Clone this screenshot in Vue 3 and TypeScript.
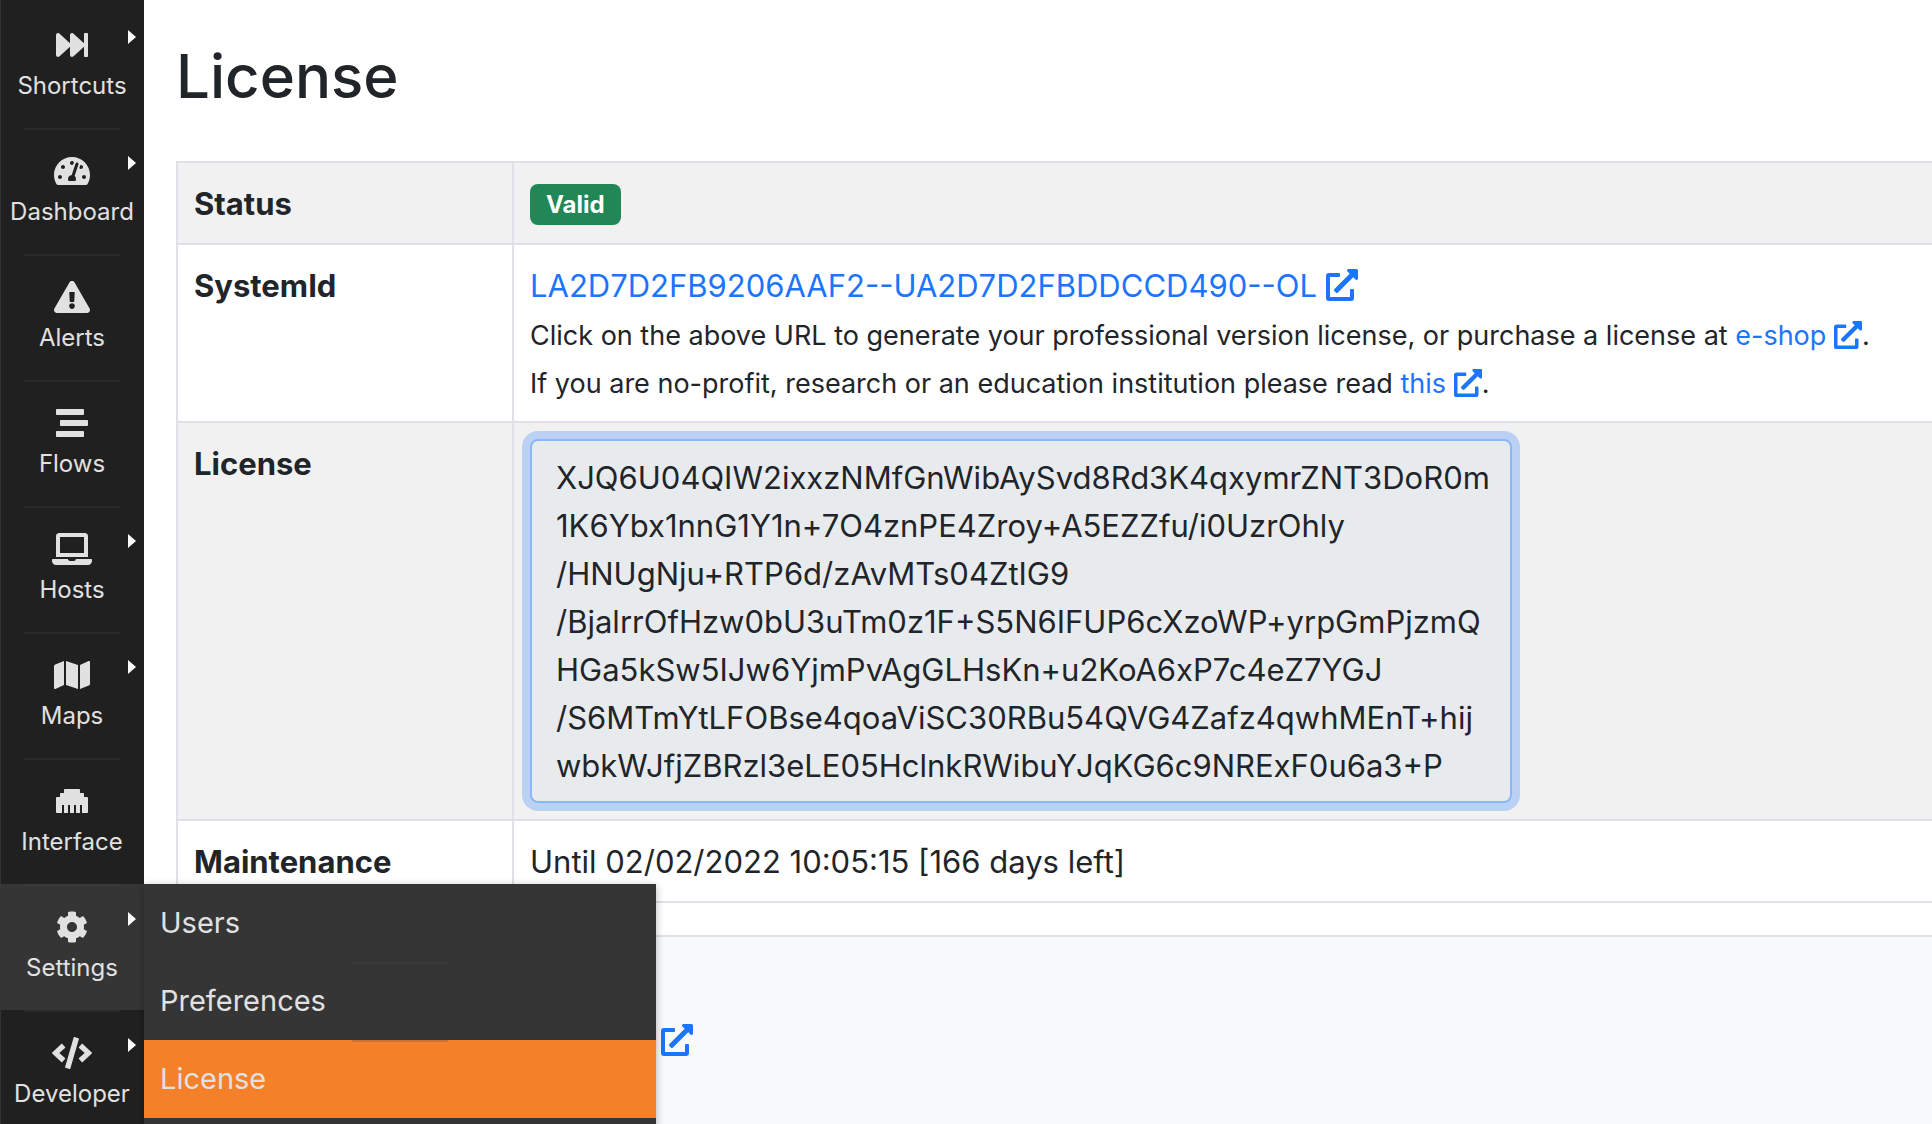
<script setup lang="ts">
interface NavItem {
  label: string
  icon: string
  width: number
  arrow: boolean
  submenu?: { label: string; active: boolean }[]
}

const externalIcon =
  'M432 320h-32a16 16 0 0 0-16 16v112H64V128h144a16 16 0 0 0 16-16V80a16 16 0 0 0-16-16H48a48 48 0 0 0-48 48v352a48 48 0 0 0 48 48h352a48 48 0 0 0 48-48V336a16 16 0 0 0-16-16zM488 0H360c-21.37 0-32.05 25.91-17 41l35.73 35.73L135 320.37a24 24 0 0 0 0 34L157.67 377a24 24 0 0 0 34 0l243.61-243.68L471 169c15 15 41 4.5 41-17V24a24 24 0 0 0-24-24z'

const navItems: NavItem[] = [
  {
    label: 'Shortcuts',
    width: 512,
    arrow: true,
    icon: 'M512 76v360c0 6.6-5.4 12-12 12h-40c-6.6 0-12-5.4-12-12V284.1L276.5 440.6c-20.6 17.2-52.5 2.8-52.5-24.6V284.1L52.5 440.6C31.9 457.8 0 443.4 0 416V96c0-27.4 31.9-41.7 52.5-24.6L224 226.8V96c0-27.4 31.9-41.7 52.5-24.6L448 226.8V76c0-6.6 5.4-12 12-12h40c6.6 0 12 5.4 12 12z',
  },
  {
    label: 'Dashboard',
    width: 576,
    arrow: true,
    icon: 'M288 32C128.94 32 0 160.94 0 320c0 52.8 14.25 102.26 39.06 144.8 5.61 9.62 16.3 15.2 27.44 15.2h443c11.14 0 21.83-5.58 27.44-15.2C561.75 422.26 576 372.8 576 320c0-159.06-128.94-288-288-288zm0 64c14.71 0 26.58 10.13 30.32 23.65-1.11 2.26-2.64 4.23-3.45 6.67l-9.22 27.67c-5.13 3.49-10.97 6.01-17.64 6.01-17.67 0-32-14.33-32-32S270.33 96 288 96zM96 384c-17.67 0-32-14.33-32-32s14.33-32 32-32 32 14.33 32 32-14.33 32-32 32zm48-160c-17.67 0-32-14.33-32-32s14.33-32 32-32 32 14.33 32 32-14.33 32-32 32zm246.77-72.41l-61.33 184C343.13 347.33 352 364.54 352 384c0 11.72-3.38 22.55-8.88 32H232.88c-5.5-9.45-8.88-20.28-8.88-32 0-33.94 26.5-61.43 59.9-63.59l61.34-184.01c4.17-12.56 17.73-19.45 30.36-15.17 12.57 4.19 19.35 17.79 15.17 30.36zm14.66 57.2l15.52-46.55c3.47-1.29 7.13-2.23 11.05-2.23 17.67 0 32 14.33 32 32s-14.33 32-32 32c-11.38-.01-20.89-6.28-26.57-15.22zM480 384c-17.67 0-32-14.33-32-32s14.33-32 32-32 32 14.33 32 32-14.33 32-32 32z',
  },
  {
    label: 'Alerts',
    width: 576,
    arrow: false,
    icon: 'M569.517 440.013C587.975 472.007 564.806 512 527.94 512H48.054c-36.937 0-59.999-40.055-41.577-71.987L246.423 23.985c18.467-32.009 64.72-31.951 83.154 0l239.94 416.028zM288 354c-25.405 0-46 20.595-46 46s20.595 46 46 46 46-20.595 46-46-20.595-46-46-46zm-43.673-165.346l7.418 136c.347 6.364 5.609 11.346 11.982 11.346h48.546c6.373 0 11.635-4.982 11.982-11.346l7.418-136c.375-6.874-5.098-12.654-11.982-12.654h-63.383c-6.884 0-12.356 5.78-11.981 12.654z',
  },
  {
    label: 'Flows',
    width: 512,
    arrow: false,
    icon: 'M16 128h416c8.84 0 16-7.16 16-16V48c0-8.84-7.16-16-16-16H16C7.16 32 0 39.16 0 48v64c0 8.84 7.16 16 16 16zm480 80H80c-8.84 0-16 7.16-16 16v64c0 8.84 7.16 16 16 16h416c8.84 0 16-7.16 16-16v-64c0-8.84-7.16-16-16-16zm-64 176H16c-8.84 0-16 7.16-16 16v64c0 8.84 7.16 16 16 16h416c8.84 0 16-7.16 16-16v-64c0-8.84-7.16-16-16-16z',
  },
  {
    label: 'Hosts',
    width: 640,
    arrow: true,
    icon: 'M624 416H381.54c-.74 19.81-14.71 32-32.74 32H288c-18.69 0-33.02-17.47-32.77-32H16c-8.8 0-16 7.2-16 16v16c0 35.2 28.8 64 64 64h512c35.2 0 64-28.8 64-64v-16c0-8.8-7.2-16-16-16zM576 48c0-26.4-21.6-48-48-48H112C85.6 0 64 21.6 64 48v336h512V48zm-64 272H128V64h384v256z',
  },
  {
    label: 'Maps',
    width: 576,
    arrow: true,
    icon: 'M0 117.66v346.32c0 11.32 11.43 19.06 21.94 14.86L160 416V32L20.12 87.95A32.006 32.006 0 0 0 0 117.66zM192 416l192 64V96L192 32v384zM554.06 33.16L416 96v384l139.88-55.95A31.996 31.996 0 0 0 576 394.34V48.02c0-11.32-11.43-19.06-21.94-14.86z',
  },
  {
    label: 'Interface',
    width: 512,
    arrow: false,
    icon: 'M496 192h-48v-48c0-8.8-7.2-16-16-16h-48V80c0-8.8-7.2-16-16-16H144c-8.8 0-16 7.2-16 16v48H80c-8.8 0-16 7.2-16 16v48H16c-8.8 0-16 7.2-16 16v224c0 8.8 7.2 16 16 16h80V320h32v128h64V320h32v128h64V320h32v128h64V320h32v128h80c8.8 0 16-7.2 16-16V208c0-8.8-7.2-16-16-16z',
  },
  {
    label: 'Settings',
    width: 512,
    arrow: true,
    icon: 'M487.4 315.7l-42.6-24.6c4.3-23.2 4.3-47 0-70.2l42.6-24.6c4.9-2.8 7.1-8.6 5.5-14-11.1-35.6-30-67.8-54.7-94.6-3.8-4.1-10-5.1-14.8-2.3L380.8 110c-17.9-15.4-38.5-27.3-60.8-35.1V25.8c0-5.6-3.9-10.5-9.4-11.7-36.7-8.2-74.3-7.8-109.2 0-5.5 1.2-9.4 6.1-9.4 11.7V75c-22.2 7.9-42.8 19.8-60.8 35.1L88.7 85.5c-4.9-2.8-11-1.9-14.8 2.3-24.7 26.7-43.6 58.9-54.7 94.6-1.7 5.4.6 11.2 5.5 14L67.3 221c-4.3 23.2-4.3 47 0 70.2l-42.6 24.6c-4.9 2.8-7.1 8.6-5.5 14 11.1 35.6 30 67.8 54.7 94.6 3.8 4.1 10 5.1 14.8 2.3l42.6-24.6c17.9 15.4 38.5 27.3 60.8 35.1v49.2c0 5.6 3.9 10.5 9.4 11.7 36.7 8.2 74.3 7.8 109.2 0 5.5-1.2 9.4-6.1 9.4-11.7v-49.2c22.2-7.9 42.8-19.8 60.8-35.1l42.6 24.6c4.9 2.8 11 1.9 14.8-2.3 24.7-26.7 43.6-58.9 54.7-94.6 1.5-5.5-.7-11.3-5.6-14.1zM256 336c-44.1 0-80-35.9-80-80s35.9-80 80-80 80 35.9 80 80-35.9 80-80 80z',
    submenu: [
      { label: 'Users', active: false },
      { label: 'Preferences', active: false },
      { label: 'License', active: true },
    ],
  },
  {
    label: 'Developer',
    width: 640,
    arrow: true,
    icon: 'M278.9 511.5l-61-17.7c-6.4-1.8-10-8.5-8.2-14.9L346.2 8.7c1.8-6.4 8.5-10 14.9-8.2l61 17.7c6.4 1.8 10 8.5 8.2 14.9L293.8 503.3c-1.9 6.4-8.5 10.1-14.9 8.2zm-114-112.2l43.5-46.4c4.6-4.9 4.3-12.7-.8-17.2L117 256l90.6-79.7c5.1-4.5 5.5-12.3.8-17.2l-43.5-46.4c-4.5-4.8-12.1-5.1-17-.5L3.8 247.2c-5.1 4.7-5.1 12.8 0 17.5l144.1 135.1c4.9 4.6 12.5 4.4 17-.5zm327.2.6l144.1-135.1c5.1-4.7 5.1-12.8 0-17.5L492.1 112.1c-4.8-4.5-12.4-4.3-17 .5L431.6 159c-4.6 4.9-4.3 12.7.8 17.2L523 256l-90.6 79.7c-5.1 4.5-5.5 12.3-.8 17.2l43.5 46.4c4.5 4.9 12.1 5.1 17 .6z',
  },
]

const licenseKey = [
  'XJQ6U04QIW2ixxzNMfGnWibAySvd8Rd3K4qxymrZNT3DoR0m',
  '1K6Ybx1nnG1Y1n+7O4znPE4Zroy+A5EZZfu/i0UzrOhly',
  '/HNUgNju+RTP6d/zAvMTs04ZtIG9',
  '/BjalrrOfHzw0bU3uTm0z1F+S5N6IFUP6cXzoWP+yrpGmPjzmQ',
  'HGa5kSw5IJw6YjmPvAgGLHsKn+u2KoA6xP7c4eZ7YGJ',
  '/S6MTmYtLFOBse4qoaViSC30RBu54QVG4Zafz4qwhMEnT+hij',
  'wbkWJfjZBRzl3eLE05HclnkRWibuYJqKG6c9NRExF0u6a3+P',
].join('\n')
</script>

<template>
  <div class="shell">
    <nav class="sidebar">
      <ul class="nav">
        <li v-for="item in navItems" :key="item.label" class="nav-item" :class="{ open: item.submenu }">
          <a class="nav-link" href="#">
            <svg class="nav-icon" :viewBox="`0 0 ${item.width} 512`" aria-hidden="true">
              <path :d="item.icon" fill="currentColor" />
            </svg>
            <span class="nav-label">{{ item.label }}</span>
            <span v-if="item.arrow" class="caret"></span>
          </a>
          <ul v-if="item.submenu" class="submenu">
            <li v-for="entry in item.submenu" :key="entry.label" class="submenu-item">
              <a class="submenu-link" :class="{ active: entry.active }" href="#">{{ entry.label }}</a>
            </li>
          </ul>
        </li>
      </ul>
    </nav>

    <div class="page">
      <main class="content">
        <h1 class="title">License</h1>
        <table class="details">
          <tbody>
            <tr>
              <th scope="row">Status</th>
              <td><div class="status"><span class="badge">Valid</span></div></td>
            </tr>
            <tr>
              <th scope="row">SystemId</th>
              <td>
                <a class="link" href="#">LA2D7D2FB9206AAF2--UA2D7D2FBDDCCD490--OL
                  <svg class="external" viewBox="0 0 512 512" aria-hidden="true"><path :d="externalIcon" fill="currentColor" /></svg></a>
                <p class="note">
                  <small>Click on the above URL to generate your professional version license, or purchase a license at
                    <a class="link" href="#">e-shop
                      <svg class="external" viewBox="0 0 512 512" aria-hidden="true"><path :d="externalIcon" fill="currentColor" /></svg></a>.</small>
                </p>
                <p class="note">
                  <small>If you are no-profit, research or an education institution please read
                    <a class="link" href="#">this
                      <svg class="external" viewBox="0 0 512 512" aria-hidden="true"><path :d="externalIcon" fill="currentColor" /></svg></a>.</small>
                </p>
              </td>
            </tr>
            <tr>
              <th scope="row"><label for="license-key">License</label></th>
              <td class="key-cell">
                <textarea id="license-key" class="key" rows="7" spellcheck="false" readonly :value="licenseKey"></textarea>
              </td>
            </tr>
            <tr>
              <th scope="row">Maintenance</th>
              <td>Until 02/02/2022 10:05:15 [166 days left]</td>
            </tr>
          </tbody>
        </table>
      </main>
      <footer class="footer">
        <a class="link footer-link" href="#" aria-label="External link">
          <svg class="external" viewBox="0 0 512 512" aria-hidden="true"><path :d="externalIcon" fill="currentColor" /></svg>
        </a>
      </footer>
    </div>
  </div>
</template>

<style>
body {
  background: #ffffff;
}
</style>

<style scoped>
.shell {
  display: flex;
  height: 100vh;
  overflow: hidden;
  color: #212529;
  font-family: Inter, "Liberation Sans", sans-serif;
  font-size: 31px;
  line-height: 48px;
}

.sidebar {
  position: relative;
  z-index: 1;
  flex: 0 0 144px;
  box-sizing: border-box;
  padding-top: 2px;
  background: #202020;
  box-shadow: inset 1px 0 #323232;
}

.nav,
.submenu {
  margin: 0;
  padding: 0;
  list-style: none;
}

.nav-item {
  position: relative;
}

.nav-item.open {
  background: #353535;
}

.nav-item + .nav-item::before,
.submenu-item + .submenu-item::before {
  content: "";
  position: absolute;
  top: 0;
  left: 50%;
  width: 96px;
  height: 2px;
  margin-left: -48px;
  background: rgba(72, 72, 72, 0.25);
}

.nav-link {
  display: flex;
  flex-direction: column;
  align-items: center;
  gap: 7px;
  box-sizing: border-box;
  height: 126px;
  padding-top: 27px;
  color: #e1e1e1;
  text-decoration: none;
}

.nav-icon {
  display: block;
  height: 32px;
}

.nav-label {
  font-size: 24px;
  line-height: 36px;
}

.caret {
  position: absolute;
  top: 28px;
  right: 8px;
  border-top: 7px solid transparent;
  border-bottom: 7px solid transparent;
  border-left: 8px solid #ffffff;
}

.submenu {
  position: absolute;
  top: 0;
  left: 100%;
  width: 512px;
  padding-bottom: 78px;
  background: #353535;
  box-shadow: 0 2px 8px rgba(0, 0, 0, 0.3);
}

.submenu-item {
  position: relative;
}

.submenu-link {
  display: block;
  padding: 15px 16px;
  color: #e1e1e1;
  font-size: 29px;
  text-decoration: none;
}

.submenu-link.active {
  background: #f4802a;
}

.page {
  display: flex;
  flex: 1;
  flex-direction: column;
  min-width: 0;
}

.content {
  padding: 38px 0 32px 32px;
}

.title {
  margin: 0 0 47px;
  font-size: 60px;
  font-weight: 500;
  line-height: 76px;
}

.details {
  width: 100%;
  border-top: 2px solid #dee2e6;
  border-left: 2px solid #dee2e6;
  border-spacing: 0;
}

.details th,
.details td {
  padding: 17px 16px 15px;
  border-bottom: 2px solid #dee2e6;
  text-align: left;
  vertical-align: top;
}

.details .key-cell {
  padding: 16px;
}

.details th {
  box-sizing: border-box;
  width: 336px;
  border-right: 2px solid #dee2e6;
  font-weight: 700;
}

.details tr:nth-child(odd) {
  background: #f1f1f1;
}

.status {
  display: flex;
  align-items: center;
  height: 48px;
}

.badge {
  padding: 8px 16px;
  border-radius: 8px;
  background: #218756;
  color: #ffffff;
  font-size: 24px;
  font-weight: 700;
  line-height: 25px;
}

.link {
  color: #1d74fd;
  text-decoration: none;
}

.external {
  width: 32px;
  height: 32px;
  vertical-align: -4px;
}

.note {
  margin: 0;
}

.note small {
  font-size: 27px;
  line-height: 36px;
}

.note .external {
  width: 28px;
  height: 28px;
}

.key {
  display: block;
  box-sizing: border-box;
  width: 982px;
  max-width: 100%;
  padding: 13px 24px 11px;
  overflow: hidden;
  border: 2px solid #8ab7fa;
  border-radius: 8px;
  outline: none;
  background: #e8ebee;
  box-shadow: 0 0 0 8px #bad1f4;
  color: #212529;
  font: inherit;
  resize: none;
  white-space: pre;
}

.footer {
  flex: 1;
  padding: 80px 0 32px 517px;
  border-top: 2px solid #dee2e6;
  background: #f8f9fb;
}

.footer-link {
  display: inline-block;
}
</style>
